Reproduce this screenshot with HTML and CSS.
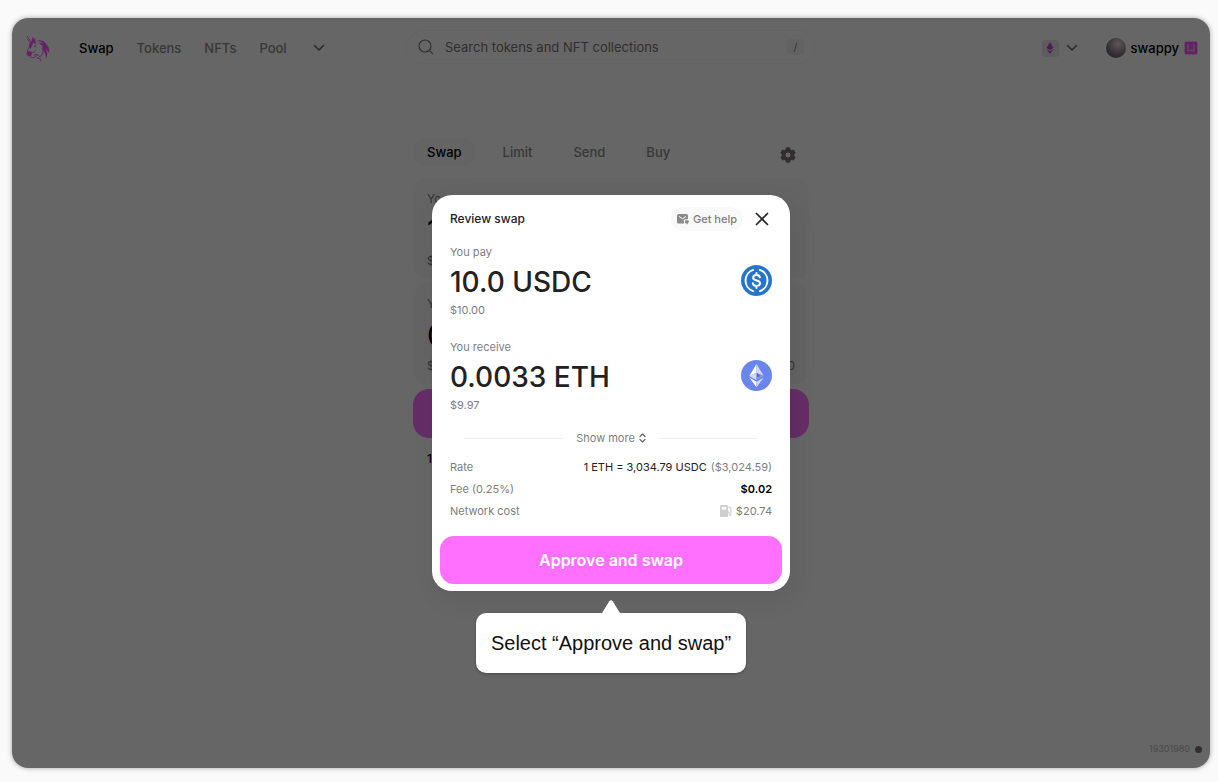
FILE: index.html
```html
<!DOCTYPE html>
<html lang="en">
<head>
<meta charset="utf-8">
<title>Review swap</title>
<link rel="stylesheet" href="styles.css">
</head>
<body>
<div class="frame">
  <div class="app">
    <header class="topbar">
      <nav class="nav">
        <a class="logo" href="#" aria-label="Home">
          <svg width="24" height="27" viewBox="0 0 72 80" fill="none" stroke="#fc50ff" stroke-linecap="round" stroke-linejoin="round">
            <path stroke-width="2.500" d="M3 3 15 19M4 12 13 22M20 8 23 20M26 10 27 20M13 22C10 28 11 33 8 39C5 45 4 49 4 54"/>
            <path fill="#fc50ff" stroke-width="1" d="M20 8C24 13 29 19 29 27L22 22C18 26 17 34 14 40L10 38C12 31 12 24 17 19ZM4 50C8 48 13 50 17 51L16 60C13 64 7 64 4 60C2 57 2 53 4 50Z"/>
            <path fill="#fc50ff" stroke-width="1" d="M36 17C49 14 58 20 61 29C68 34 71 44 68 53C66 45 62 42 58 39C64 50 65 58 61 69C60 58 57 51 51 46C48 42 47 36 52 32C47 30 43 28 40 23C47 24 51 25 55 28C50 21 44 18 36 17Z"/>
            <path stroke-width="3" d="M17 51C22 54 24 51 28 47M14 66C24 70 31 64 31 60M24 60C31 56 39 59 42 66M34 68C41 69 44 72 45 77M50 48C53 54 49 61 43 63"/>
            <circle cx="27" cy="33" r="2.500" fill="#fc50ff" stroke="none"/>
          </svg>
        </a>
        <a class="nav-link active" href="#">Swap</a>
        <a class="nav-link" href="#">Tokens</a>
        <a class="nav-link" href="#">NFTs</a>
        <a class="nav-link" href="#">Pool</a>
        <button class="plain more" type="button" aria-label="More">
          <svg width="12" height="8" viewBox="0 0 12 8" fill="none" stroke="#6b6b6b" stroke-width="1.600" stroke-linecap="round" stroke-linejoin="round"><path d="m1.500 1.500 4.500 4.500 4.500-4.500"/></svg>
        </button>
      </nav>
      <label class="search">
        <svg width="16" height="16" viewBox="0 0 16 16" fill="none" stroke="#7d7d7d" stroke-width="1.200" stroke-linecap="round"><circle cx="7" cy="7" r="6"/><path d="m11.400 11.400 3.400 3.400"/></svg>
        <input type="text" placeholder="Search tokens and NFT collections" aria-label="Search tokens and NFT collections">
        <kbd>/</kbd>
      </label>
      <div class="account">
        <button class="plain network" type="button" aria-label="Network">
          <span class="chain"><svg width="8" height="12" viewBox="0 0 8 12" fill="#c04fc4"><path d="M4 0 7.500 6 4 8.200.5 6ZM.5 7.300 4 9.300l3.500-2L4 12Z"/></svg></span>
          <svg width="12" height="8" viewBox="0 0 12 8" fill="none" stroke="#6b6b6b" stroke-width="1.600" stroke-linecap="round" stroke-linejoin="round"><path d="m1.500 1.500 4.500 4.500 4.500-4.500"/></svg>
        </button>
        <button class="plain user" type="button">
          <span class="avatar"></span>
          <span>swappy</span>
          <svg width="14" height="14" viewBox="0 0 14 14"><path fill="#fc50ff" d="M1 .8 4 .4l3 .4 3-.4 3 .4.6 3-.4 3 .4 3-.6 3.400-3 .4-3-.4-3 .4-3-.4-.6-3.400.4-3-.4-3Z"/><path d="M4 3.300v6.200h6V3.300" fill="none" stroke="#d8c4d8" stroke-width="1.500"/></svg>
        </button>
      </div>
    </header>

    <main class="swap">
      <div class="tabs">
        <button class="tab selected" type="button">Swap</button>
        <button class="tab" type="button">Limit</button>
        <button class="tab" type="button">Send</button>
        <button class="tab" type="button">Buy</button>
        <button class="plain settings" type="button" aria-label="Settings">
          <svg width="16" height="16" viewBox="0 0 16 16"><path fill="#7d7478" stroke="#7d7478" stroke-linejoin="round" fill-rule="evenodd" d="M6.400.8h3.200l.6 1.900 1.400.8 2-.4 1.600 2.700L13.800 7.300v1.400l1.400 1.500-1.600 2.700-2-.4-1.400.8-.6 1.900H6.400l-.6-1.900-1.400-.8-2 .4L.8 10.200l1.400-1.500V7.300L.8 5.800l1.600-2.700 2 .4 1.400-.8ZM8 5a3 3 0 1 0 0 6 3 3 0 0 0 0-6Z"/></svg>
        </button>
      </div>
      <section class="panel">
        <span class="panel-label">You pay</span>
        <span class="panel-value">10</span>
        <div class="panel-foot"><span>$10.00</span></div>
      </section>
      <section class="panel">
        <span class="panel-label">You receive</span>
        <span class="panel-value">0.0033</span>
        <div class="panel-foot"><span>$9.97</span><span>Balance: 0</span></div>
      </section>
      <button class="behind-action" type="button" aria-label="Review"></button>
      <p class="behind-rate">1 ETH = 3,034.79 USDC</p>
    </main>

    <footer class="block"><span>19301980</span><i class="block-dot"></i></footer>
  </div>

  <div class="backdrop">
    <div class="modal" role="dialog" aria-labelledby="modal-title">
      <div class="modal-body">
        <div class="modal-head">
          <h1 id="modal-title">Review swap</h1>
          <button class="help" type="button">
            <svg width="12" height="11" viewBox="0 0 12 11"><path fill="#8a8a8a" d="M1.500 0h8A1.500 1.500 0 0 1 11 1.500V5.200H8.500A1.800 1.800 0 0 0 7 8v1.500H1.500A1.500 1.500 0 0 1 0 8V1.500A1.500 1.500 0 0 1 1.500 0Z"/><path d="m1.800 2.300 3.700 2.500 3.700-2.500" fill="none" stroke="#f9f9f9" stroke-width="1"/><path fill="#8a8a8a" d="M8.300 6.200h2.900l.8 1-.8 2-1.500 1.500V9.300H8.300l-.6-1Z"/></svg>
            Get help
          </button>
          <button class="plain close" type="button" aria-label="Close">
            <svg width="14" height="14" viewBox="0 0 14 14" stroke="#222" stroke-width="1.700" stroke-linecap="round"><path d="m1.500 1.500 11 11m0-11-11 11"/></svg>
          </button>
        </div>

        <section class="amount">
          <div>
            <p class="muted">You pay</p>
            <p class="value">10.0 USDC</p>
            <p class="muted">$10.00</p>
          </div>
          <svg class="token" width="31" height="31" viewBox="0 0 32 32" role="img" aria-label="USDC">
            <circle cx="16" cy="16" r="16" fill="#2775ca"/>
            <g fill="none" stroke="#fff" stroke-width="2" stroke-linecap="round"><path d="M12.500 5.100a11.500 11.500 0 0 0 0 21.800M19.500 5.100a11.500 11.500 0 0 1 0 21.800"/><path d="M19.500 12.900c-.3-1.700-1.600-2.500-3.500-2.500s-3.500 1-3.500 2.700c0 4 7.200 1.700 7.200 5.600 0 1.900-1.600 2.900-3.700 2.900s-3.600-1-3.800-2.900M16 8.300v2.100M16 21.600v2.100"/></g>
          </svg>
        </section>

        <section class="amount">
          <div>
            <p class="muted">You receive</p>
            <p class="value">0.0033 ETH</p>
            <p class="muted">$9.97</p>
          </div>
          <svg class="token" width="31" height="31" viewBox="0 0 32 32" role="img" aria-label="ETH">
            <circle cx="16" cy="16" r="16" fill="#6a85ec"/>
            <path fill="#fff" d="m16 4-7.500 12.500L16 13.200ZM8.500 18 16 28v-5.500Z"/>
            <path fill="#d3d9f3" d="m16 4 7.500 12.500L16 13.200ZM23.500 18 16 28v-5.500ZM8.500 16.500 16 13.200V21Z"/>
            <path fill="#8797dc" d="m16 13.200 7.500 3.300L16 21Z"/>
            <path fill="#4b66d5" d="m16.500 14 3.500 2.500-3.500 1.200Z"/>
          </svg>
        </section>

        <div class="divider">
          <button class="plain show-more" type="button">Show more
            <svg width="7" height="10" viewBox="0 0 7 10" fill="none" stroke="#6b6b6b" stroke-width="1.300" stroke-linecap="round" stroke-linejoin="round"><path d="M1 3.500 3.500 1 6 3.500M1 6.500 3.500 9 6 6.500"/></svg>
          </button>
        </div>

        <dl class="details">
          <dt>Rate</dt><dd><span class="dark">1 ETH = 3,034.79 USDC</span> ($3,024.59)</dd>
          <dt>Fee (0.25%)</dt><dd class="strong">$0.02</dd>
          <dt>Network cost</dt>
          <dd class="gas"><svg width="12" height="12" viewBox="0 0 12 12"><path fill="#cecece" d="M1.500 0h5A1.500 1.500 0 0 1 8 1.500V12H0V1.500A1.500 1.500 0 0 1 1.500 0Z"/><path fill="#fff" d="M1.700 2h4.600v2.600H1.700Z"/><path fill="none" stroke="#cecece" stroke-width="1.100" stroke-linecap="round" d="m9 1.500 1.900 2v5.700c0 1.300-1.700 1.300-1.700 0V7.500L8 7"/></svg>$20.74</dd>
        </dl>
      </div>
      <button class="approve" type="button">Approve and swap</button>
    </div>
    <div class="tip" role="tooltip">
      <svg class="tip-arrow" width="18" height="13" viewBox="0 0 18 13" fill="#fff"><path d="M0 13 7.300 1.200Q9-.8 10.700 1.200L18 13Z"/></svg>
      Select “Approve and swap”
    </div>
  </div>
</div>
</body>
</html>
```

FILE: styles.css
```css
* { box-sizing: border-box; }

body {
  margin: 0;
  min-height: 100vh;
  display: flex;
  padding: 18px 8px 14px 12px;
  background: #fafafa;
  font-family: Inter, "Liberation Sans", sans-serif;
  font-size: 13px;
  line-height: 16px;
  color: #222;
}

p, h1, dl, dd { margin: 0; }
a { color: inherit; text-decoration: none; }
button { font: inherit; color: inherit; border: 0; cursor: pointer; }
svg { display: block; flex: none; }

.plain { padding: 0; background: none; display: flex; align-items: center; }

.frame {
  position: relative;
  flex: 1;
  display: flex;
  border-radius: 16px;
  overflow: hidden;
  box-shadow: 0 0 5px rgba(0, 0, 0, .35);
}

.app {
  flex: 1;
  display: flex;
  flex-direction: column;
  background: #fff;
}

.topbar {
  display: grid;
  grid-template-columns: 1fr 410px 1fr;
  align-items: center;
  padding: 12px 12px 0;
}

.nav { display: flex; align-items: center; gap: 23px; padding: 2px 0 0 2px; color: #8c8c8c; font-weight: 500; }
.logo { margin-right: 6px; }
.active { color: #000; }
.more { margin-left: 3px; }

.search {
  display: flex;
  align-items: center;
  gap: 11px;
  height: 34px;
  padding: 0 11px;
  border: 1px solid #f7f7f7;
  border-radius: 17px;
}
.search input {
  flex: 1;
  min-width: 0;
  padding: 0;
  border: 0;
  background: none;
  font: inherit;
}
.search input::placeholder { color: #7d7478; opacity: 1; }
.search kbd {
  width: 17px;
  border-radius: 4px;
  background: #f5f5f5;
  color: #8c8688;
  font: inherit;
  font-size: 11px;
  text-align: center;
}

.account { display: flex; justify-content: flex-end; align-items: center; gap: 28px; padding-top: 2px; }
.network { gap: 7px; }
.chain { display: grid; place-items: center; width: 17px; height: 17px; border-radius: 4px; background: #ebe6eb; }
.user { gap: 5px; color: #000; font-weight: 500; }
.avatar {
  width: 20px;
  height: 20px;
  border-radius: 50%;
  background: radial-gradient(circle at 60% 30%, #e4dce0, #8f858c 50%, #3c383a);
}

.swap { width: 396px; margin: 73px auto 0; display: flex; flex-direction: column; gap: 4px; }
.tabs { display: flex; align-items: center; gap: 13px; margin-bottom: 7px; }
.tab { height: 30px; padding: 0 14px; border-radius: 15px; background: none; color: #8c8c8c; font-weight: 500; }
.selected { background: #f9f9f9; color: #000; }
.settings { margin: 6px 13px 0 auto; }

.panel {
  display: flex;
  flex-direction: column;
  height: 101px;
  padding: 13px 14px 10px;
  border-radius: 14px;
  background: #fbfbfb;
  color: #7d7d7d;
  font-size: 12px;
}
.panel-value { margin: 5px 0 auto; font-size: 30px; line-height: 36px; color: #000; }
.panel-foot { display: flex; justify-content: space-between; }
.behind-action { height: 49px; margin-top: 1px; border-radius: 16px; background: #fc72ff; }
.behind-rate { margin: 9px 14px 0; font-size: 12px; font-weight: 500; color: #000; }

.block {
  display: flex;
  justify-content: flex-end;
  align-items: center;
  gap: 5px;
  margin-top: auto;
  padding: 0 8px 11px;
  font-size: 9px;
  color: #b8b8b8;
}
.block-dot { width: 7px; height: 7px; border-radius: 50%; background: #7d7478; }

.backdrop {
  position: absolute;
  inset: 0;
  display: flex;
  flex-direction: column;
  align-items: center;
  gap: 22px;
  padding-top: 177px;
  background: rgba(0, 0, 0, .6);
}

.modal {
  width: 358px;
  padding: 12px 8px 7px;
  border-radius: 20px;
  background: #fff;
  box-shadow: 4px 8px 24px rgba(0, 0, 0, .08);
  font-size: 11px;
}
.modal-body { padding: 0 10px; }
.modal-head { display: flex; align-items: center; margin-bottom: 13px; }
.modal-head h1 { margin-right: auto; font-size: 12px; font-weight: 500; line-height: 16px; }
.help {
  display: flex;
  align-items: center;
  gap: 4px;
  height: 24px;
  padding: 0 6px;
  border-radius: 12px;
  background: #f9f9f9;
  color: #7d7d7d;
  font-weight: 500;
}
.close { margin: 0 3px 0 12px; }

.amount { display: flex; justify-content: space-between; align-items: flex-start; margin-bottom: 21px; }
.token { margin-top: 21px; }
.muted { color: #7d7d7d; }
.value { margin: 4px 0 2px; font-size: 28px; font-weight: 500; line-height: 36px; }

.divider { display: flex; align-items: center; gap: 13px; margin: -4px 14px 13px; }
.divider::before, .divider::after { content: ""; flex: 1; height: 1px; background: #ededed; }
.show-more { gap: 4px; color: #7d7d7d; }

.details { display: grid; grid-template-columns: auto 1fr; gap: 6px; color: #7d7d7d; }
.details dd { display: flex; justify-content: flex-end; gap: 4px; }
.dark { color: #222; }
.details .strong { color: #000; font-weight: 600; }
.gas { align-items: center; }

.approve {
  display: block;
  width: 100%;
  height: 48px;
  margin-top: 17px;
  border-radius: 14px;
  background: #ff70ff;
  color: #fff;
  font-size: 16px;
  font-weight: 600;
}

.tip {
  position: relative;
  padding: 18px 15px;
  border-radius: 10px;
  background: #fff;
  color: #111;
  font-family: "Liberation Sans", Arial, sans-serif;
  font-size: 20px;
  line-height: 24px;
  box-shadow: 0 1px 3px rgba(0, 0, 0, .3);
}
.tip-arrow { position: absolute; bottom: 100%; left: 50%; margin-left: -9px; }
```
